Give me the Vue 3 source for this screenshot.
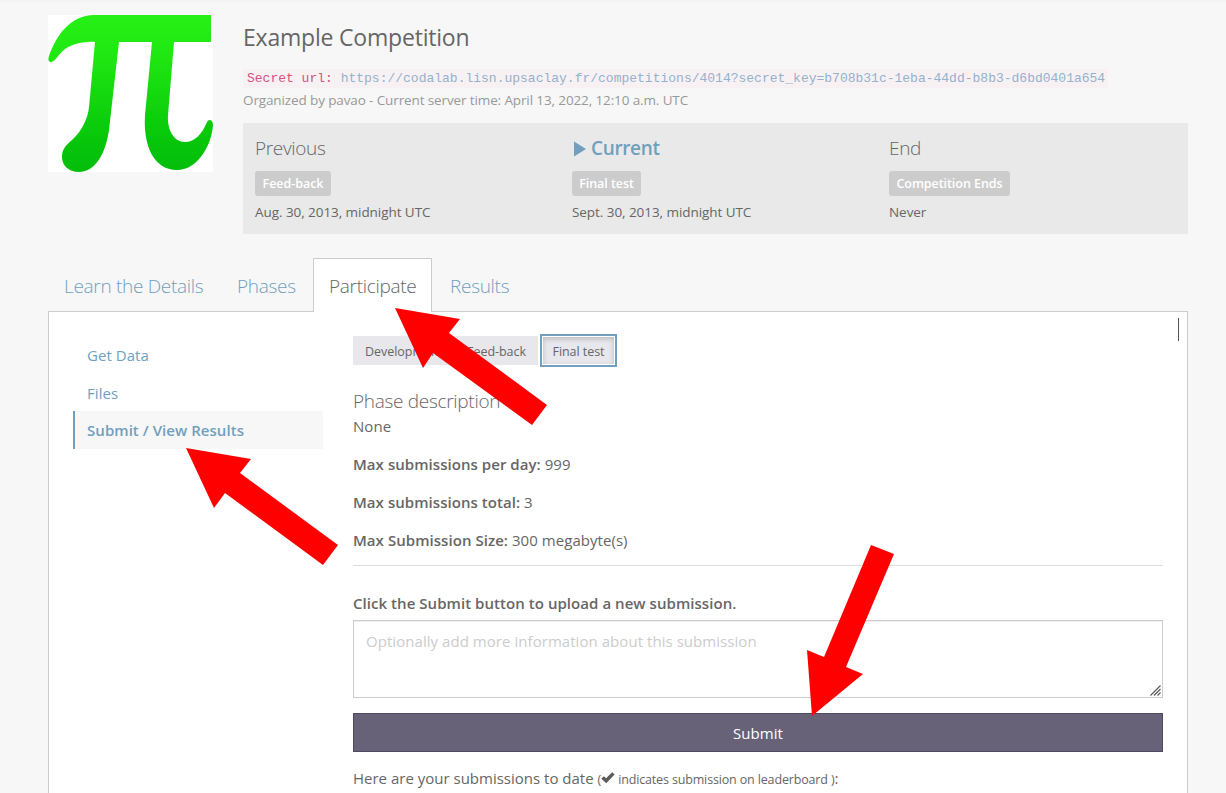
<script setup>
const phases = [
  { title: 'Previous', badge: 'Feed-back', date: 'Aug. 30, 2013, midnight UTC', k: 'a' },
  { title: 'Current', badge: 'Final test', date: 'Sept. 30, 2013, midnight UTC', k: 'b', current: true },
  { title: 'End', badge: 'Competition Ends', date: 'Never', k: 'c' },
]
const tabs = [
  { name: 'Learn the Details', k: 't1' },
  { name: 'Phases', k: 't2' },
  { name: 'Participate', k: 't3', active: true },
  { name: 'Results', k: 't4' },
]
const limits = [
  { label: 'Max submissions per day:', value: '999', k: 'm1' },
  { label: 'Max submissions total:', value: '3', k: 'm2' },
  { label: 'Max Submission Size:', value: '300 megabyte(s)', k: 'm3' },
]
</script>

<template>
  <div class="page">
    <header class="head">
      <svg class="logo" viewBox="0 0 165 157">
        <defs>
          <linearGradient id="pi" x1="0" y1="0" x2="0" y2="1">
            <stop offset="0" stop-color="#26f014" />
            <stop offset="0.25" stop-color="#20e812" />
            <stop offset="0.8" stop-color="#06c60a" />
            <stop offset="1" stop-color="#04bd0c" />
          </linearGradient>
        </defs>
        <rect width="165" height="157" fill="#fff" />
        <path fill="url(#pi)" d="M46 0H163V27H126L120 100C119 115 126 127 137 127C147 127 154 119 159 107C160 104 165 104 165 110C164 128 151 155 129 155C105 155 95 129 97 100L104 27H71L61 115C58 137 48 157 31 157C20 157 14 150 14 142C14 134 18 130 24 125C33 117 40 104 41 92L47 27C31 26 18 31 11 40C7 45 5 47 3 47C0 47 0 44 1 41C8 20 23 0 46 0Z" />
      </svg>
      <div class="info">
        <h1>Example Competition</h1>
        <div class="secret"><code>Secret url: <a>https://codalab.lisn.upsaclay.fr/competitions/4014?secret_key=b708b31c-1eba-44dd-b8b3-d6bd0401a654</a></code></div>
        <div class="org">Organized by pavao - Current server time: April 13, 2022, 12:10 a.m. UTC</div>
        <div class="phases">
          <div v-for="p in phases" :key="p.k" class="phase">
            <h2 :class="{ current: p.current }">
              <svg v-if="p.current" width="14" height="16" viewBox="0 0 14 16"><path d="M2 0.5L14 8L2 15.5Z" fill="#719fbe" /></svg>
              <span>{{ p.title }}</span>
            </h2>
            <div><span class="badge" :class="'bd-' + p.k">{{ p.badge }}</span></div>
            <div class="date">{{ p.date }}</div>
          </div>
        </div>
      </div>
    </header>

    <nav class="tabs">
      <a v-for="t in tabs" :key="t.k" :class="[t.k, { active: t.active }]"><span>{{ t.name }}</span></a>
    </nav>

    <main class="panel">
      <aside class="side">
        <a>Get Data</a>
        <a>Files</a>
        <a class="on"><span>Submit / View Results</span></a>
      </aside>
      <section class="content">
        <div class="btns">
          <button class="b1"><span>Development</span></button>
          <button class="b2"><span>Feed-back</span></button>
          <button class="b3"><span>Final test</span></button>
        </div>
        <h3>Phase description</h3>
        <p class="none">None</p>
        <p v-for="l in limits" :key="l.k" :class="l.k"><b>{{ l.label }}</b> {{ l.value }}</p>
        <hr />
        <label><span>Click the Submit button to upload a new submission.</span></label>
        <div class="area">
          <span>Optionally add more information about this submission</span>
          <svg width="11" height="11" viewBox="0 0 11 11"><path d="M0.5 10.5L10.5 0.5M4 10.5L10.5 4M7.5 10.5L10.5 7.5" stroke="#555" stroke-width="1.1" /></svg>
        </div>
        <div class="submit"><span>Submit</span></div>
        <div class="list">
          <span class="here">Here are your submissions to date</span>
          <span class="small s1">(</span><svg width="14" height="12" viewBox="0 0 14 12"><path d="M0.3 6.8L2.8 4.2L5.1 6.3L11.2 0.3L13.6 2.6L5.3 11.2Z" fill="#5c5c5c" /></svg><span class="small s2">indicates submission on leaderboard )</span><span class="here">:</span>
        </div>
      </section>
      <i class="bar"></i>
    </main>

    <svg class="arrows" width="1226" height="793" viewBox="0 0 1226 793">
      <g fill="#f00">
        <polygon points="395,308 460,319 449,333 547,405 532,425 433,353 423,368" />
        <polygon points="186,448 251,459 240,473 338,545 323,565 225,493 214,508" />
        <polygon points="871,545 894,554 846,667 863,674 812,716 807,650 824,657" />
      </g>
    </svg>
  </div>
</template>

<style>
body { background: #f7f7f7; }
</style>

<style scoped>
* { box-sizing: border-box; margin: 0; padding: 0; }
.page {
  position: relative; width: 1226px; height: 793px; overflow: hidden;
  padding: 15px 38px 0 48px; background: linear-gradient(#f3f3f3, #f7f7f7 4px);
  font-family: "Open Sans", "Noto Sans", sans-serif; font-size: 15px; letter-spacing: 0.05px; color: #666; white-space: nowrap;
  display: flex; flex-direction: column;
}
.head { display: flex; gap: 30px; height: 219px; flex: none; }
.logo { width: 165px; height: 157px; flex: none; }
.info { width: 945px; }
h1 { font-size: 23px; font-weight: 400; line-height: 44px; height: 54px; letter-spacing: -0.2px; }
.secret { height: 19px; display: flex; }
code {
  font-family: "Liberation Mono", monospace; font-size: 13px; letter-spacing: 0; color: #d6537c;
  background: #f8f1f4; height: 19px; line-height: 20px; padding: 0 3px 0 4px;
}
code a { color: #92b2cd; }
.org { font-size: 13.5px; line-height: 24px; height: 35px; color: #999; letter-spacing: -0.12px; }
.phases { display: grid; grid-template-columns: repeat(3, 317px); background: #e9e9e9; height: 111px; padding: 12px 0 0 12px; overflow: hidden; }
h2 { font-size: 19px; font-weight: 300; line-height: 26px; height: 36px; display: flex; letter-spacing: -0.35px; }
h2.current { font-weight: 600; color: #719fbe; }
h2 svg { margin: 6px 5px 0 0; }
.badge {
  display: inline-block; height: 25px; line-height: 25px; border-radius: 3px; background: #ccc; color: #fff;
  font-size: 12.5px; font-weight: 600; text-align: center; letter-spacing: -0.05px;
}
.bd-a { width: 76px; }
.bd-b { width: 69px; }
.bd-c { width: 121px; }
.date { font-size: 13.5px; line-height: 32px; letter-spacing: -0.06px; }
.tabs { display: flex; margin-top: 24px; height: 54px; flex: none; position: relative; z-index: 1; }
.tabs a { font-size: 19px; font-weight: 300; line-height: 54px; letter-spacing: -0.3px; color: #719fbe; border: 1px solid transparent; border-bottom: 0; height: 54px; padding-left: 15px; }
.tabs a.active { background: #fff; border-color: #ccc; color: #666; }
.t1 { width: 173px; }
.t2 { width: 92px; }
.t3 { width: 119px; }
.t4 { width: 90px; margin-left: 2px; }
.panel { margin-top: -1px; width: 1140px; height: 520px; border: 1px solid #ccc; background: #fff; display: flex; flex: none; }
.side { width: 250px; margin: 24px 30px 0 24px; display: flex; flex-direction: column; }
.side a { height: 38px; line-height: 38px; padding-left: 14px; color: #719fbe; }
.side a.on { font-weight: 600; background: #f7f7f7; border-left: 2px solid #719fbe; padding-left: 12px; margin-top: -1px; }
.content { width: 810px; padding-top: 22px; }
.btns { display: flex; height: 33px; align-items: center; }
.btns button { height: 29px; border: 0; background: #e7e7ec; color: #666; font: 12.5px "Open Sans", sans-serif; letter-spacing: -0.05px; padding-top: 2px; }
.b1 { width: 102px; }
.b2 { width: 83px; }
.btns .b3 { width: 77px; height: 33px; margin-left: 2px; border: 2px solid #719fbe; box-shadow: inset 0 0 0 1px #fff, inset 0 2px 5px 1px #bbb; }
h3 { font-size: 19px; font-weight: 300; line-height: 26px; margin-top: 21px; letter-spacing: -0.3px; }
p { height: 38px; line-height: 24px; }
b { font-weight: 600; }
hr { border: 0; height: 1px; background: #ddd; margin-top: -1px; }
label { display: block; font-weight: 600; line-height: 24px; margin-top: 25px; height: 29px; }
.area {
  border: 1px solid #ccc; height: 78px; padding: 8px 12px; line-height: 24px; color: #ccc;
  box-shadow: inset 0 1px 1px #0001; position: relative;
}
.area svg { position: absolute; right: 1px; bottom: 1px; fill: none; }
.submit { height: 39px; margin-top: 15px; border: 1px solid #4e4960; background: #676278; color: #fff; text-align: center; line-height: 39px; }
.list { margin-top: 14px; line-height: 24px; display: flex; align-items: baseline; }
.here { letter-spacing: 0; }
.small { font-size: 12.5px; letter-spacing: -0.15px; }
.s1 { margin-left: 4px; }
.s2 { margin-left: 3px; }
.bar { width: 1px; height: 23px; margin: 6px 0 0 15px; background: #555; }
.arrows { position: absolute; left: 0; top: 0; z-index: 2; }
</style>
